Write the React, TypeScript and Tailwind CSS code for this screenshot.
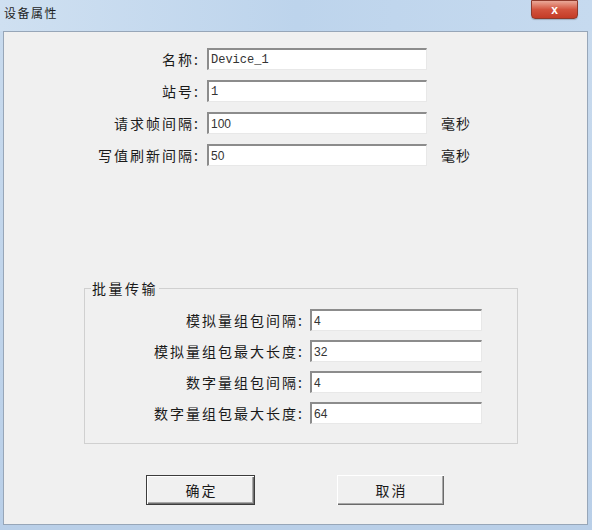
import React from "react";

const CJK = "font-['Noto_Sans_CJK_SC','Liberation_Sans',sans-serif]";

const TOP_FIELDS = [
  { label: "名称:", value: "Device_1", mono: true, unit: "" },
  { label: "站号:", value: "1", mono: true, unit: "" },
  { label: "请求帧间隔:", value: "100", mono: false, unit: "毫秒" },
  { label: "写值刷新间隔:", value: "50", mono: false, unit: "毫秒" },
];

const BATCH_FIELDS = [
  { label: "模拟量组包间隔:", value: "4" },
  { label: "模拟量组包最大长度:", value: "32" },
  { label: "数字量组包间隔:", value: "4" },
  { label: "数字量组包最大长度:", value: "64" },
];

const Field = ({ value, mono, width }: { value: string; mono?: boolean; width: string }) => (
  <div
    className={`${width} h-[22px] bg-white border-t-2 border-l-2 border-b border-r border-t-[#8c8c8c] border-l-[#8c8c8c] border-b-[#e8e8e8] border-r-[#e8e8e8] flex items-center pl-[2px] text-[12px] tracking-normal text-[#333] ${
      mono ? "font-['Liberation_Mono',monospace]" : "font-['Liberation_Sans',sans-serif]"
    }`}
  >
    {value}
  </div>
);

export default function App() {
  return (
    <div className="w-[592px] h-[530px] bg-gradient-to-b from-[#c9dbee] to-[#b9cfe8] flex flex-col overflow-hidden">
      {/* title bar */}
      <div className="h-[31px] flex items-start justify-between bg-gradient-to-r from-[#cfe0f1] via-[#bdd4ec] to-[#c6daef]">
        <span className={`${CJK} text-[12px] text-[#1e1e1e] mt-[4px] ml-[4px] tracking-[1.5px]`}>设备属性</span>
        <div className="w-[47px] h-[19px] mr-[14px] rounded-b-[4px] border border-[#8e3a2c] bg-gradient-to-b from-[#e9a898] via-[#d2533e] to-[#c43b26] flex items-center justify-center shadow-[0_1px_1px_rgba(0,0,0,0.2)]">
          <span className="text-white text-[12px] font-bold leading-none font-['Liberation_Sans',sans-serif]">x</span>
        </div>
      </div>

      {/* client area */}
      <div className={`${CJK} ml-[3px] mr-[4px] h-[494px] bg-[#f0f0f0] border border-[#97a6b8] text-[14px] tracking-[2px] text-[#1a1a1a] flex flex-col`}>
        <div className="flex flex-col gap-[10px] pt-[16px]">
          {TOP_FIELDS.map((f) => (
            <div key={f.label} className="flex items-center h-[22px]">
              <span className="w-[201px] pr-[5px] text-right">{f.label}</span>
              <div className="ml-[2px]">
                <Field value={f.value} mono={f.mono} width="w-[220px]" />
              </div>
              {f.unit && <span className="ml-[14px] tracking-[1px]">{f.unit}</span>}
            </div>
          ))}
        </div>

        <fieldset className="ml-[80px] mt-[113px] w-[434px] border border-[#d0d0d0] pb-[19px]">
          <legend className="ml-[6px] px-[1px] leading-[18px] tracking-[2.5px]">批量传输</legend>
          <div className="flex flex-col gap-[9px] mt-[12px]">
            {BATCH_FIELDS.map((f) => (
              <div key={f.label} className="flex items-center h-[22px]">
                <span className="w-[223px] pr-[4px] text-right">{f.label}</span>
                <div className="ml-[2px]">
                  <Field value={f.value} width="w-[172px]" />
                </div>
              </div>
            ))}
          </div>
        </fieldset>

        <div className="flex mt-[31px] ml-[142px] gap-[82px]">
          <button className="w-[109px] h-[30px] pl-[2px] border border-[#3c3c3c] bg-[#f0f0f0] shadow-[inset_1px_1px_0_#ffffff,inset_-1px_-1px_0_#707070,inset_-2px_-2px_0_#a8a8a8]">
            确定
          </button>
          <button className="w-[107px] h-[30px] pl-[2px] bg-[#f0f0f0] shadow-[inset_1px_1px_0_#ffffff,inset_-1px_-1px_0_#6a6a6a,inset_-2px_-2px_0_#a8a8a8]">
            取消
          </button>
        </div>
      </div>
    </div>
  );
}
